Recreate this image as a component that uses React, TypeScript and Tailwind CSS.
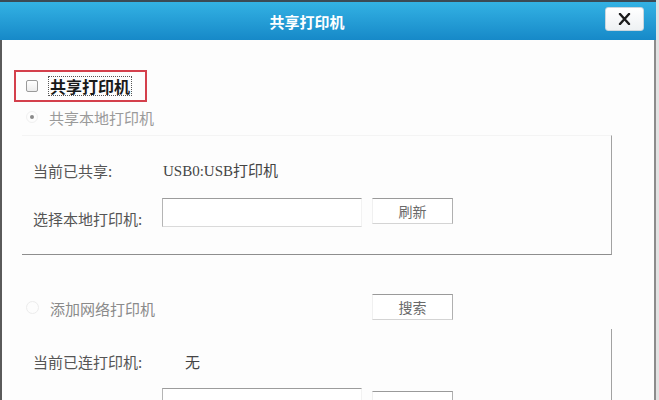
import React from 'react';

const cjk = "font-['Noto_Sans_CJK_SC','Noto_Sans',sans-serif]";

function Btn({ label, className = '' }: { label: string; className?: string }) {
  return (
    <button
      type="button"
      className={`shrink-0 w-[81px] h-[26px] bg-white border border-t-[#9a9a9a] border-r-[#b0b0b0] border-b-[#d4d4d4] border-l-[#f0f0f0] text-[14px] leading-none text-[#6a6a6a] ${className}`}
    >
      {label}
    </button>
  );
}

function Field() {
  return (
    <div className="shrink-0 w-[200px] h-[29px] bg-white border border-t-[#9c9c9c] border-l-[#b5b5b5] border-b-[#dadada] border-r-[#f2f2f2]" />
  );
}

export default function App() {
  return (
    <div className={`w-[659px] h-[400px] overflow-hidden bg-[#e2e2e2] flex ${cjk}`}>
      <div className="w-[656px] h-[400px] flex flex-col border-t-2 border-[#3b4a55]">
        {/* title bar */}
        <div className="shrink-0 h-[38px] flex items-center bg-gradient-to-b from-[#33b2e4] to-[#1689c8]">
          <span className="flex-1 text-center pl-[9px] text-white font-bold text-[15px] leading-none">共享打印机</span>
          <button
            type="button"
            className="w-[39px] h-[24px] mr-[12px] mt-[-4px] bg-gradient-to-b from-white to-[#eef1f3] rounded-[3px] border border-[#c9d6de] flex items-center justify-center"
          >
            <svg width="13" height="12" viewBox="0 0 13 12">
              <path d="M2 1 L11 11 M11 1 L2 11" stroke="#1c1c1c" strokeWidth="2.4" strokeLinecap="round" />
            </svg>
          </button>
        </div>

        {/* body */}
        <div className="flex-1 min-h-0 overflow-hidden bg-[#fdfdfd] border-l-2 border-l-[#5a5a5a] border-r-2 border-r-[#8c8c8c] flex flex-col">
          <div className="shrink-0 mt-[30px] ml-[12px] w-[133px] h-[32px] border-2 border-[#d4404c] flex items-center pl-[10px] gap-[10px]">
            <span className="w-[12px] h-[12px] rounded-[2px] border border-[#9a9a9a] bg-gradient-to-b from-white to-[#ececec]" />
            <span className="border border-dotted border-[#555] px-[1px] text-[16px] leading-[18px] font-semibold text-[#1a1a1a]">共享打印机</span>
          </div>

          <div className="shrink-0 mt-[7px] ml-[24px] flex items-center gap-[11px] h-[16px]">
            <span className="w-[12px] h-[12px] rounded-full border border-[#f0f0f0] flex items-center justify-center">
              <span className="w-[4px] h-[4px] rounded-full bg-[#8a8a8a]" />
            </span>
            <span className="text-[15px] leading-none text-[#9a9a9a]">共享本地打印机</span>
          </div>

          {/* local printer group */}
          <div className="shrink-0 mt-[10px] ml-[20px] w-[590px] border-t border-t-[#f4f4f4] border-r border-r-[#a2a2a2] border-b border-b-[#8e8e8e] pl-[11px] pt-[25px] pb-[25px] flex flex-col">
            <div className="flex items-center h-[20px]">
              <span className="w-[130px] text-[15px] text-[#555]">当前已共享:</span>
              <span className="text-[15px] text-[#444] font-['Liberation_Serif','Noto_Sans_CJK_SC',serif]">USB0:USB打印机</span>
            </div>
            <div className="mt-[17px] flex items-start">
              <span className="w-[129px] mt-[11px] text-[15px] leading-[20px] text-[#555]">选择本地打印机:</span>
              <Field />
              <Btn label="刷新" className="ml-[10px]" />
            </div>
          </div>

          {/* network printer */}
          <div className="shrink-0 mt-[39px] ml-[24px] flex items-center h-[26px]">
            <div className="w-[346px] flex items-center">
              <span className="w-[13px] h-[13px] rounded-full border border-[#ececec]" />
              <span className="ml-[11px] mt-[3px] text-[15px] leading-none text-[#8a8a8a]">添加网络打印机</span>
            </div>
            <Btn label="搜索" />
          </div>

          <div className="shrink-0 mt-[9px] ml-[20px] w-[590px] border-r border-r-[#a2a2a2] pl-[11px] pt-[23px] flex flex-col">
            <div className="flex items-center h-[20px]">
              <span className="w-[152px] text-[15px] text-[#555]">当前已连打印机:</span>
              <span className="text-[15px] text-[#444]">无</span>
            </div>
            <div className="mt-[16px] flex items-start">
              <span className="w-[129px]" />
              <Field />
              <Btn label="" className="ml-[10px] mt-[3px]" />
            </div>
          </div>
        </div>
      </div>
    </div>
  );
}
